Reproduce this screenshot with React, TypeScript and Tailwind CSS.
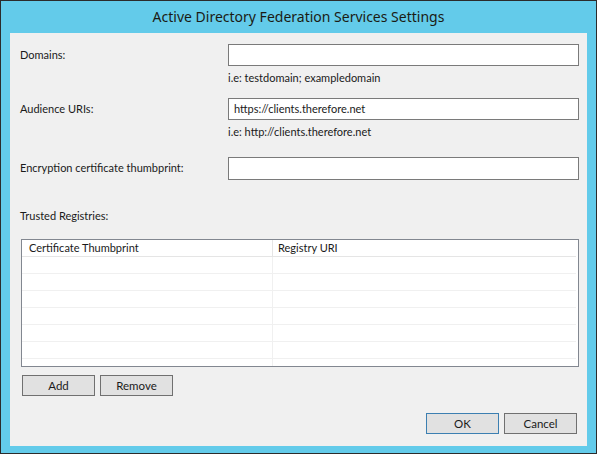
import React from 'react';

const font = { fontFamily: 'Lato, "Noto Sans", sans-serif' };

const Field: React.FC<{ label: string; value?: string; hint?: string; top: string; tall?: boolean }> = ({ label, value, hint, top, tall }) => (
    <div className={top}>
        <div className="flex items-center">
            <span className="w-[208px] shrink-0">{label}</span>
            <div className={`flex-1 ${tall ? 'h-[23px]' : 'h-[22px]'} bg-white border border-[#7a7a7a] flex items-center px-[5px]`}>
                {value}
            </div>
        </div>
        {hint && <div className="ml-[208px] mt-[4px] leading-[16px]">{hint}</div>}
    </div>
);

const Button: React.FC<{ label: string; primary?: boolean }> = ({ label, primary }) => (
    <button
        className={`w-[73px] h-[21px] bg-[#e1e1e1] border text-[11.5px] leading-none ${primary ? 'border-[#3c7fb1]' : 'border-[#707070]'}`}
    >
        {label}
    </button>
);

export default function App() {
    const rows = [0, 1, 2, 3, 4, 5];

    return (
        <div className="w-[599px] h-[455px] bg-white" style={font}>
            <div className="w-[597px] h-[454px] bg-[#63cbea] border border-[#2b2b2b] flex flex-col">
                <div
                    className="h-[32px] shrink-0 flex items-center justify-center text-[14px] text-[#1b1b14] pb-[1px]"
                    style={{ fontFamily: '"Noto Sans", sans-serif' }}
                >
                    Active Directory Federation Services Settings
                </div>
                <div className="ml-[9px] mr-[9px] h-[413px] bg-[#f0f0f0] pl-[10px] pr-[8px] text-[11px] text-[#1a1a1a] flex flex-col">
                    <Field top="mt-[11px]" label="Domains:" hint="i.e: testdomain; exampledomain" />
                    <Field top="mt-[12px]" label="Audience URIs:" value="https://clients.therefore.net" hint="i.e: http://clients.therefore.net" />
                    <Field top="mt-[17px]" label="Encryption certificate thumbprint:" tall />

                    <div className="mt-[28px] leading-[16px]">Trusted Registries:</div>

                    <div className="mt-[15px] ml-[1px] h-[128px] bg-white border border-[#828790] flex flex-col">
                        <div className="h-[17px] shrink-0 flex border-b border-[#e5e5e5] mr-[2px]">
                            <div className="w-[251px] border-r border-[#e5e5e5] pl-[7px] leading-[16px]">Certificate Thumbprint</div>
                            <div className="flex-1 pl-[5px] leading-[16px]">Registry URI</div>
                        </div>
                        {rows.map((r) => (
                            <div key={r} className="h-[17px] shrink-0 flex border-b border-[#f0f0f0] mr-[2px]">
                                <div className="w-[251px] border-r border-[#f0f0f0]" />
                                <div className="flex-1" />
                            </div>
                        ))}
                        <div className="flex-1 flex mr-[2px]">
                            <div className="w-[251px] border-r border-[#f0f0f0]" />
                        </div>
                    </div>

                    <div className="mt-[8px] ml-[2px] flex gap-[5px]">
                        <Button label="Add" />
                        <Button label="Remove" />
                    </div>

                    <div className="mt-[17px] flex justify-end gap-[5px] mr-[2px]">
                        <Button label="OK" primary />
                        <Button label="Cancel" />
                    </div>
                </div>
            </div>
        </div>
    );
}
